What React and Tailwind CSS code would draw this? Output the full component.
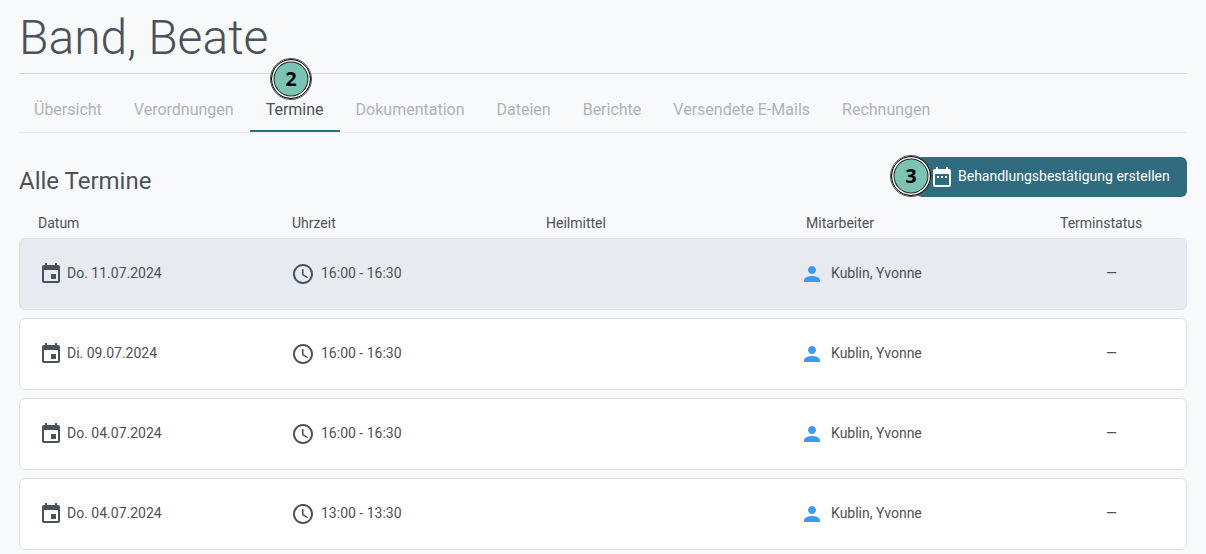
import React from 'react';

const tabs = ['Übersicht', 'Verordnungen', 'Termine', 'Dokumentation', 'Dateien', 'Berichte', 'Versendete E-Mails', 'Rechnungen'];

const termine = [
  { datum: 'Do. 11.07.2024', zeit: '16:00 - 16:30', active: true },
  { datum: 'Di. 09.07.2024', zeit: '16:00 - 16:30' },
  { datum: 'Do. 04.07.2024', zeit: '16:00 - 16:30' },
  { datum: 'Do. 04.07.2024', zeit: '13:00 - 13:30' },
];

const EventIcon = () => (
  <svg viewBox="0 0 24 24" className="w-6 h-6 fill-[#4b5158] shrink-0">
    <path d="M17 12h-5v5h5v-5zM16 1v2H8V1H6v2H5c-1.11 0-1.99.9-1.99 2L3 19c0 1.1.89 2 2 2h14c1.1 0 2-.9 2-2V5c0-1.1-.9-2-2-2h-1V1h-2zm3 18H5V8h14v11z" />
  </svg>
);

const DateRangeIcon = () => (
  <svg viewBox="0 0 24 24" className="w-6 h-6 fill-white shrink-0">
    <path d="M9 11H7v2h2v-2zm4 0h-2v2h2v-2zm4 0h-2v2h2v-2zm2-7h-1V2h-2v2H8V2H6v2H5c-1.11 0-1.99.9-1.99 2L3 20c0 1.1.89 2 2 2h14c1.1 0 2-.9 2-2V6c0-1.1-.9-2-2-2zm0 16H5V9h14v11z" />
  </svg>
);

const ClockIcon = () => (
  <svg viewBox="0 0 24 24" className="w-6 h-6 fill-[#4b5158] shrink-0">
    <path d="M11.99 2C6.47 2 2 6.48 2 12s4.47 10 9.99 10C17.52 22 22 17.52 22 12S17.52 2 11.99 2zM12 20c-4.42 0-8-3.58-8-8s3.58-8 8-8 8 3.58 8 8-3.58 8-8 8zm.5-13H11v6l5.25 3.15.75-1.23-4.5-2.67z" />
  </svg>
);

const PersonIcon = () => (
  <svg viewBox="0 0 24 24" className="w-6 h-6 fill-[#3b9bf5] shrink-0">
    <path d="M12 12c2.21 0 4-1.79 4-4s-1.79-4-4-4-4 1.79-4 4 1.79 4 4 4zm0 2c-2.67 0-8 1.34-8 4v2h16v-2c0-2.66-5.33-4-8-4z" />
  </svg>
);

// numbered marker that sits over the page
const Badge = ({ children, className }) => (
  <div className={`absolute w-10 h-10 rounded-full bg-[#7ac4b4] border border-black outline outline-1 outline-[#555] shadow-[inset_0_0_0_1.5px_#fff,inset_0_0_0_2.5px_#222] flex items-center justify-center text-[20px] font-bold text-black font-['Noto_Sans',sans-serif] ${className}`}>
    {children}
  </div>
);

const App = () => {
  return (
    <div className="relative w-[1206px] h-[554px] overflow-hidden bg-[#f8f9fb] px-[19px] font-['Roboto',sans-serif] text-[#4b5158]">
      <h1 className="h-[74px] border-b border-[#d9dbde] pt-[10px] text-[48px] leading-[56px] font-light">Band, Beate</h1>

      {/* Tabs */}
      <div className="h-[59px] border-b border-[#e9ebee]">
        <div className="flex -ml-px">
          {tabs.map((tab) => (
            <div
              key={tab}
              className={`h-[58px] px-4 pt-[26px] text-[16px] leading-[20px] ${tab === 'Termine' ? 'border-b-2 border-[#2f6c80] text-[#4b5158]' : 'text-[#adb3bb]'}`}
            >
              {tab}
            </div>
          ))}
        </div>
      </div>

      <div className="flex items-start justify-between pt-6 h-[65px]">
        <h2 className="pt-[9px] text-[24px] leading-[30px]">Alle Termine</h2>
        <button className="flex h-10 w-[271px] items-center gap-1 rounded-md bg-[#2f6c80] pl-[14px] text-[14px] text-white">
          <DateRangeIcon />
          <span className="pb-[2px]">Behandlungsbestätigung erstellen</span>
        </button>
      </div>

      {/* Table header */}
      <div className="grid grid-cols-[254px_254px_260px_254px_1fr] h-[40px] pl-[19px] pt-[16px] text-[14px] leading-[18px]">
        <div>Datum</div>
        <div>Uhrzeit</div>
        <div>Heilmittel</div>
        <div>Mitarbeiter</div>
        <div>Terminstatus</div>
      </div>

      {/* Rows */}
      <div className="flex flex-col gap-2">
        {termine.map((t, i) => (
          <div
            key={i}
            className={`grid grid-cols-[271px_254px_255px_257px_1fr] items-center h-[72px] rounded-md border text-[14px] ${t.active ? 'bg-[#e7eaee] border-[#dfe1e5]' : 'bg-white border-[#dfe1e5]'}`}
          >
            <div className="flex items-center gap-[4px] pl-[19px]">
              <EventIcon />
              <span className="pb-[2px]">{t.datum}</span>
            </div>
            <div className="flex items-center gap-[6px]">
              <ClockIcon />
              <span className="pb-[2px]">{t.zeit}</span>
            </div>
            <div />
            <div className="flex items-center gap-[7px]">
              <PersonIcon />
              <span className="pb-[2px]">{'Kublin, Yvonne'}</span>
            </div>
            <div className="pl-[49px] pb-[2px]">—</div>
          </div>
        ))}
      </div>

      <Badge className="left-[271px] top-[59px]">2</Badge>
      <Badge className="left-[891px] top-[156px]">3</Badge>
    </div>
  );
};

export default App;
